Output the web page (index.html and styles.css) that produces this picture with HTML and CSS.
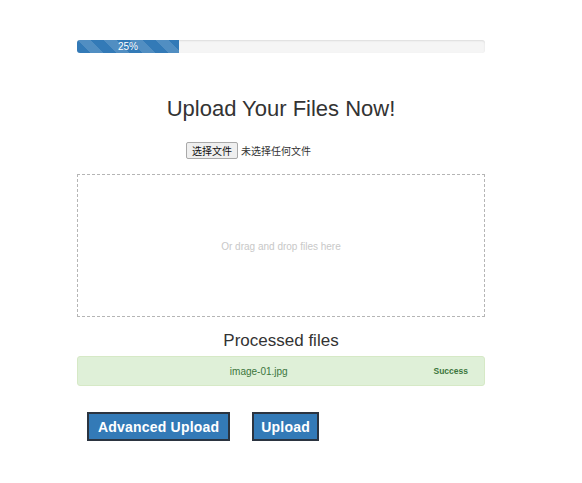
FILE: index.html
```html
<!DOCTYPE html>
<html>
<head>
<meta charset="utf-8">
<link rel="stylesheet" href="styles.css">
</head>
<body>
<div class="container">
  <div class="progress"><div class="progress-bar" style="width:25%">25%</div></div>
  <h1 class="title">Upload Your Files Now!</h1>
  <div class="file-row">
    <span class="file-btn">选择文件</span><span class="file-none">未选择任何文件</span>
  </div>
  <div class="dropzone">Or drag and drop files here</div>
  <h2 class="sub">Processed files</h2>
  <div class="item">
    <span class="name">image-01.jpg</span>
    <span class="status">Success</span>
  </div>
  <div class="actions">
    <button class="btn btn-wide">Advanced Upload</button>
    <button class="btn">Upload</button>
  </div>
</div>
</body>
</html>
```
FILE: styles.css
```css
* { box-sizing: border-box; }
body {
  margin: 0;
  font-family: "Liberation Sans", Arial, sans-serif;
  color: #333;
  background: #fff;
}
.container {
  width: 408px;
  margin-left: 77px;
  padding-top: 40px;
}
.progress {
  height: 13px;
  background: #f5f5f5;
  border-radius: 3px;
  box-shadow: inset 0 1px 2px rgba(0,0,0,0.1);
  overflow: hidden;
}
.progress-bar {
  height: 100%;
  background-color: #337ab7;
  background-image: linear-gradient(45deg, rgba(255,255,255,.15) 25%, transparent 25%, transparent 50%, rgba(255,255,255,.15) 50%, rgba(255,255,255,.15) 75%, transparent 75%, transparent);
  background-size: 26px 26px;
  color: #fff;
  font-size: 10px;
  line-height: 13px;
  text-align: center;
}
.title {
  margin: 41px 0 0;
  font-size: 22px;
  font-weight: normal;
  text-align: center;
  line-height: 30px;
}
.file-row {
  margin: 18px 0 0 109px;
  display: flex;
  align-items: center;
  height: 17px;
  font-family: "Noto Sans CJK SC", sans-serif;
  font-size: 10px;
}
.file-btn {
  display: inline-block;
  border: 1px solid #a9a9a9;
  background: #efefef;
  border-radius: 2px;
  padding: 0 5px;
  height: 17px;
  line-height: 15px;
  color: #111;
}
.file-none { margin-left: 3px; color: #333; }
.dropzone {
  margin-top: 15px;
  height: 143px;
  border: 1px dashed #b5b5b5;
  display: flex;
  align-items: center;
  justify-content: center;
  color: #c8c8c8;
  font-size: 10px;
  padding-top: 2px;
}
.sub {
  margin: 13px 0 0;
  font-size: 17px;
  font-weight: normal;
  text-align: center;
  line-height: 22px;
}
.item {
  margin-top: 4px;
  height: 30px;
  background: #dff0d8;
  border: 1px solid #d6e9c6;
  border-radius: 3px;
  color: #3c763d;
  display: flex;
  align-items: center;
  padding: 0 16px 0 0;
}
.name {
  flex: 1;
  text-align: center;
  font-size: 10px;
  padding-left: 6px;
}
.status {
  font-size: 8.5px;
  font-weight: bold;
}
.actions {
  margin: 26px 0 0 10px;
  display: flex;
  gap: 22px;
}
.btn {
  height: 29px;
  background: #337ab7;
  border: 2px solid #2b3440;
  color: #fff;
  font-family: "Liberation Sans", Arial, sans-serif;
  font-weight: bold;
  font-size: 14px;
  padding: 0 7px;
  letter-spacing: 0.2px;
}
.btn-wide { padding: 0 9px; }
```
